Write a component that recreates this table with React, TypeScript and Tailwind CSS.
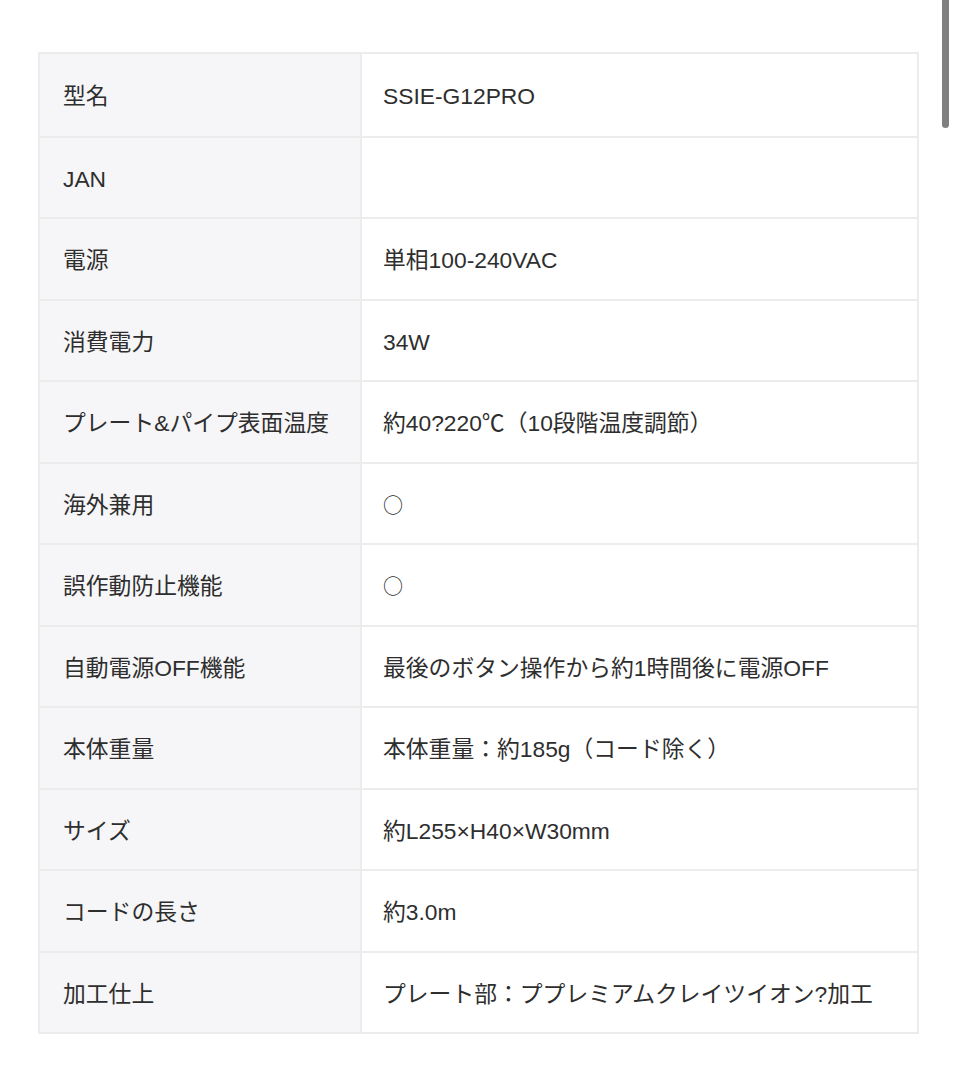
const specs: { label: string; value: string }[] = [
  { label: '型名', value: 'SSIE-G12PRO' },
  { label: 'JAN', value: '' },
  { label: '電源', value: '単相100-240VAC' },
  { label: '消費電力', value: '34W' },
  { label: 'プレート&パイプ表面温度', value: '約40?220℃（10段階温度調節）' },
  { label: '海外兼用', value: '○' },
  { label: '誤作動防止機能', value: '○' },
  { label: '自動電源OFF機能', value: '最後のボタン操作から約1時間後に電源OFF' },
  { label: '本体重量', value: '本体重量：約185g（コード除く）' },
  { label: 'サイズ', value: '約L255×H40×W30mm' },
  { label: 'コードの長さ', value: '約3.0m' },
  { label: '加工仕上', value: 'プレート部：ププレミアムクレイツイオン?加工' },
];

export default function App() {
  return (
    <div
      className="relative min-h-[1080px] bg-white text-[#2e2e2e] pt-[52px]"
      style={{ fontFamily: '"Liberation Sans", "Noto Sans CJK JP", sans-serif' }}
    >
      {/* spec table */}
      <div className="ml-[38px] w-[881px] border-2 border-[#ececec]">
        {specs.map((row, i) => (
          <div
            key={row.label}
            className={`flex h-[81.5px] ${i > 0 ? 'border-t-2 border-[#ececec]' : ''}`}
          >
            <div className="w-[322px] shrink-0 flex items-center pl-[23px] pt-[3px] bg-[#f6f6f8] border-r-2 border-[#ececec] text-[22.8px]">
              {row.label}
            </div>
            <div className="flex-1 flex items-center pl-[21px] pt-[3px] text-[22.8px]">
              {row.value === '○' ? (
                <span className="text-[20px]" style={{ fontFamily: '"Noto Sans CJK JP", sans-serif' }}>
                  ○
                </span>
              ) : (
                row.value
              )}
            </div>
          </div>
        ))}
      </div>

      {/* scroll indicator */}
      <div className="absolute left-[942px] top-0 w-[7px] h-[128px] bg-[#808080] rounded-b-full" />
    </div>
  );
}
